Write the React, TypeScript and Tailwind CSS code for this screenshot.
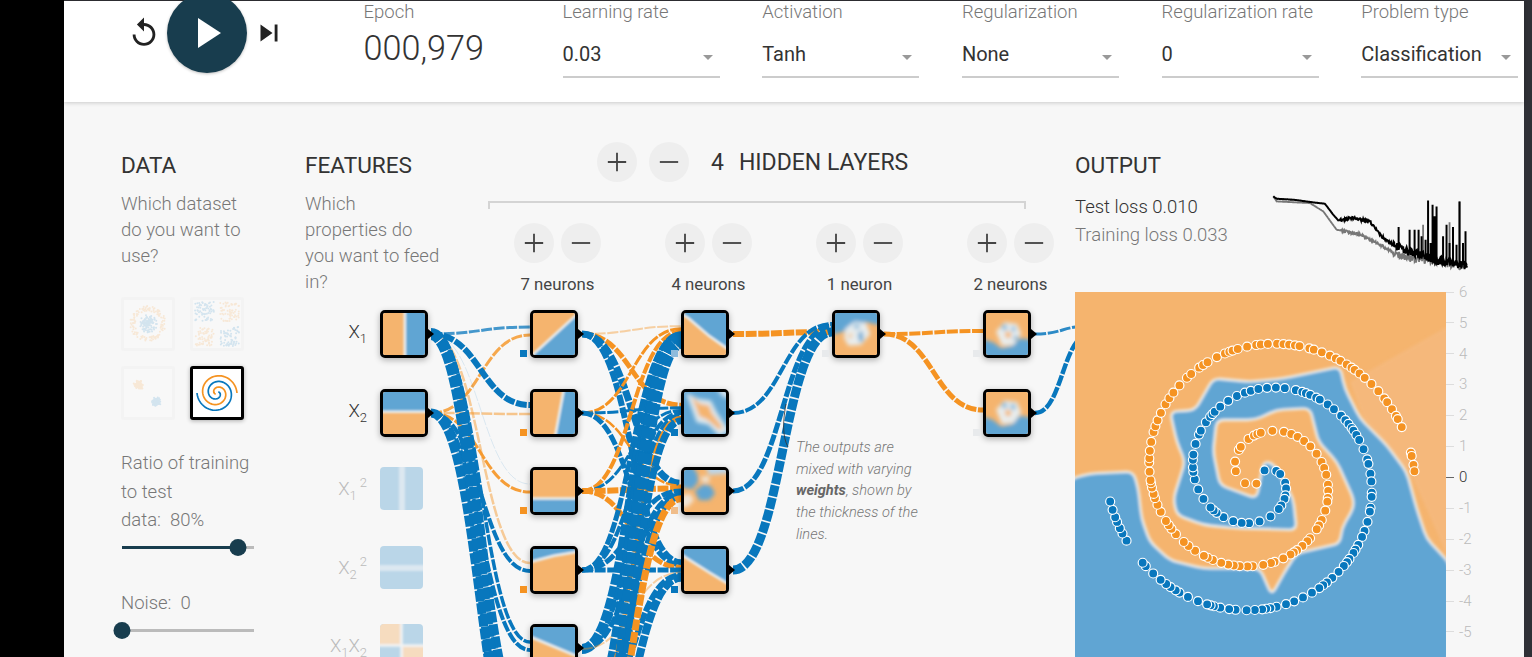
import { ReactNode } from 'react';

const BLUE = '#0877bd';
const ORANGE = '#f59322';
const HEAT_B = '#61a5d3';
const HEAT_O = '#f5b46e';

// small seeded random so the page is the same on every load
function seeded(seed: number) {
  let s = seed;
  return () => {
    s = (s * 1664525 + 1013904223) % 4294967296;
    return s / 4294967296;
  };
}

function curve(sx: number, sy: number, tx: number, ty: number) {
  const m = (sx + tx) / 2;
  return `M${sx} ${sy}C${m} ${sy} ${m} ${ty} ${tx} ${ty}`;
}

// ---------- heatmaps ----------

type Shape = { p: string; c?: string; bare?: boolean };
type HeatDef = { base: string; shapes: Shape[]; cloudy?: boolean };

function Heat({ def }: { def: HeatDef }) {
  return (
    <svg viewBox="0 0 100 100" className="block h-full w-full">
      <rect x="0" y="0" width="100" height="100" fill={def.base} />
      <g filter={def.cloudy ? 'url(#cloud)' : 'url(#soft)'}>
        {def.shapes.map((s, i) => (
          <polygon
            key={i}
            points={s.p}
            fill={s.c ?? HEAT_B}
            stroke={s.bare ? 'none' : '#e9eff1'}
            strokeWidth="6"
          />
        ))}
      </g>
    </svg>
  );
}

const HEATS: Record<string, HeatDef> = {
  x1: { base: HEAT_O, shapes: [{ p: '52,-10 110,-10 110,110 52,110' }] },
  x2: { base: HEAT_O, shapes: [{ p: '-10,-10 110,-10 110,47 -10,47' }] },
  x1sq: { base: HEAT_B, shapes: [{ p: '44,-10 58,-10 58,110 44,110', c: '#b5d3e8', bare: true }] },
  x2sq: { base: HEAT_B, shapes: [{ p: '-10,44 110,44 110,58 -10,58', c: '#b5d3e8', bare: true }] },
  xx: {
    base: HEAT_B,
    shapes: [
      { p: '-10,-10 50,-10 50,50 -10,50', c: HEAT_O },
      { p: '50,50 110,50 110,110 50,110', c: HEAT_O },
    ],
  },
  a1: { base: HEAT_O, shapes: [{ p: '-10,108 110,-2 110,110 -10,110' }] },
  a2: { base: HEAT_O, shapes: [{ p: '74,-10 110,-10 110,110 52,110' }] },
  a3: { base: HEAT_O, shapes: [{ p: '-10,68 110,68 110,110 -10,110' }] },
  a4: { base: HEAT_O, shapes: [{ p: '-10,-10 110,-10 110,6 50,16 -10,32' }] },
  a5: { base: HEAT_O, shapes: [{ p: '-10,-10 110,-10 110,72 -10,22' }] },
  b1: { base: HEAT_O, shapes: [{ p: '-10,-10 110,-10 110,90 60,55 10,12 -10,0' }] },
  b2: {
    base: HEAT_B,
    shapes: [
      { p: '4,2 34,16 64,20 78,48 108,92 84,104 58,78 30,72 20,44', c: '#dfe9ee', bare: true },
      { p: '18,10 38,28 60,32 66,50 92,84 84,90 56,66 36,58 30,40', c: HEAT_O, bare: true },
      { p: '76,-10 110,-10 110,16 92,12', c: '#cfe1ee', bare: true },
    ],
    cloudy: true,
  },
  b3: {
    base: HEAT_O,
    shapes: [
      { p: '-10,-10 20,-10 32,10 34,28 20,46 -10,40', bare: true },
      { p: '26,50 46,34 64,38 74,56 60,72 36,72', bare: true },
      { p: '50,-10 110,-10 110,8 60,12', c: '#bcd6e9', bare: true },
      { p: '-10,62 14,56 24,72 8,88 -10,88', c: '#f0e4d6', bare: true },
      { p: '40,16 60,14 60,30 44,30', c: '#ece3d6', bare: true },
    ],
    cloudy: true,
  },
  b4: { base: HEAT_O, shapes: [{ p: '-10,-10 110,-10 110,86 60,56 0,18 -10,10' }] },
  c1: {
    base: HEAT_O,
    shapes: [
      { p: '-10,-10 110,-10 110,30 75,22 40,30 22,44 -10,52', bare: true },
      { p: '24,38 46,20 74,24 84,50 62,76 32,78 22,60', c: '#e8edee', bare: true },
      { p: '46,24 62,30 54,40 44,36', c: '#9cc5e0', bare: true },
      { p: '54,48 66,42 68,66 58,70', c: '#74add6', bare: true },
      { p: '30,52 42,46 40,60 32,62', c: '#f3cfa6', bare: true },
    ],
    cloudy: true,
  },
  d1: {
    base: HEAT_O,
    shapes: [
      { p: '-10,62 18,70 36,84 64,78 80,60 110,64 110,110 -10,110', bare: true },
      { p: '24,44 44,22 74,26 84,50 66,76 38,78', c: '#e8edee', bare: true },
      { p: '36,30 48,26 52,38 40,42', c: '#8fbddd', bare: true },
      { p: '62,30 72,36 68,46 60,42', c: '#8fbddd', bare: true },
      { p: '46,44 60,46 58,60 46,58', c: HEAT_O, bare: true },
      { p: '70,52 78,58 70,68 64,60', c: '#8fbddd', bare: true },
    ],
    cloudy: true,
  },
  d2: {
    base: HEAT_O,
    shapes: [
      { p: '-10,58 16,66 36,82 64,76 80,56 110,62 110,110 -10,110', bare: true },
      { p: '24,42 44,20 74,24 84,48 66,74 38,76', c: '#e8edee', bare: true },
      { p: '36,28 48,24 52,36 40,40', c: '#8fbddd', bare: true },
      { p: '60,26 72,32 68,44 58,40', c: '#8fbddd', bare: true },
      { p: '46,42 60,44 58,58 46,56', c: HEAT_O, bare: true },
    ],
    cloudy: true,
  },
};

// ---------- network ----------

const ORIGIN_X = 305;
const ORIGIN_Y = 300;

type NodeDef = { x: number; y: number; heat: string; bias?: string };

const NODES: NodeDef[] = [
  { x: 380, y: 310, heat: 'x1' },
  { x: 380, y: 389, heat: 'x2' },
  { x: 530, y: 310, heat: 'a1', bias: BLUE },
  { x: 530, y: 389, heat: 'a2', bias: ORANGE },
  { x: 530, y: 467, heat: 'a3', bias: ORANGE },
  { x: 530, y: 546, heat: 'a4', bias: ORANGE },
  { x: 530, y: 624, heat: 'a5' },
  { x: 681, y: 310, heat: 'b1', bias: '#8dbbdc' },
  { x: 681, y: 389, heat: 'b2', bias: BLUE },
  { x: 681, y: 467, heat: 'b3', bias: '#f0bd8a' },
  { x: 681, y: 546, heat: 'b4', bias: BLUE },
  { x: 832, y: 310, heat: 'c1', bias: '#e8eaec' },
  { x: 983, y: 310, heat: 'd1', bias: '#e8eaec' },
  { x: 983, y: 389, heat: 'd2', bias: '#e8eaec' },
];

// sx, sy, tx, ty, width (negative = orange), opacity
type LinkDef = [number, number, number, number, number, number?];

const S_OUT = [334, 413, 491, 570, 649, 728, 806];

const T_Y = (center: number, i: number) => center + (i - 3) * 2.6;

// source row -> width into each of the four nodes of the second layer
const MIDDLE: [number, number, number, number][] = [
  [-2, -5, 7, 6],
  [-3, 3, -2.5, 5],
  [-4, 3, -6, -5],
  [5, 4, 5, 5],
  [10, 5, 5, -2],
  [12, -5, 7, 6],
  [14, 7, -7, 8],
];

const LINKS: LinkDef[] = [
  [431, 334, 530, 327, 3, 0.75],
  [431, 413, 530, 335, -3, 0.8],
  [431, 334, 530, 405, 6],
  [431, 413, 530, 414, -2.5, 0.5],
  [431, 334, 530, 484, 1, 0.12],
  [431, 413, 530, 492, -3, 0.9],
  [431, 334, 530, 563, -2.5, 0.45],
  [431, 413, 530, 571, 4],
  [431, 334, 530, 642, 3.5],
  [431, 413, 530, 650, 4],
  [431, 413, 530, 712, 4, 0.65],
  [431, 334, 530, 728, 9],
  [431, 413, 530, 790, 9],
  [431, 334, 530, 800, 12],
];

S_OUT.forEach((sy, row) => {
  const centers = [334, 413, 491, 570];
  MIDDLE[row].forEach((w, j) => {
    const light = Math.abs(w) <= 2;
    LINKS.push([582, sy, 681, T_Y(centers[j], row), w, light ? 0.4 : undefined]);
  });
});

LINKS.push(
  [733, 334, 832, 332, -6],
  [733, 413, 832, 324, 4],
  [733, 491, 832, 326, 5],
  [733, 570, 832, 332, 9],
  [884, 334, 983, 331, -4],
  [884, 334, 983, 410, -5],
  [1035, 334, 1090, 326, 3, 0.85],
  [1035, 413, 1090, 334, 4.5],
);

function LinkLayer() {
  return (
    <svg
      viewBox={`${ORIGIN_X} ${ORIGIN_Y} 800 400`}
      className="absolute left-0 top-0 h-[400px] w-[800px]"
      fill="none"
    >
      {LINKS.map(([sx, sy, tx, ty, w, op], i) => (
        <path
          key={i}
          d={curve(sx, sy, tx, ty)}
          stroke={w < 0 ? ORANGE : BLUE}
          strokeWidth={Math.abs(w)}
          strokeOpacity={op ?? 1}
          strokeDasharray="11 1.6"
        />
      ))}
      <path d="M786 404C783 420 782 436 788 447" stroke="#333" strokeWidth="0.8" />
    </svg>
  );
}

function Node({ def }: { def: NodeDef }) {
  return (
    <div
      className="absolute h-12 w-12"
      style={{ left: def.x - ORIGIN_X, top: def.y - ORIGIN_Y }}
    >
      <div className="h-12 w-12 overflow-hidden rounded-[5px] border-[3px] border-black bg-white shadow-[0_2px_6px_rgba(0,0,0,0.3)]">
        <Heat def={HEATS[def.heat]} />
      </div>
      <div className="absolute left-12 top-[19px] h-0 w-0 border-y-[5px] border-l-[6px] border-y-transparent border-l-black" />
      {def.bias && (
        <div
          className="absolute left-[-10px] top-10 h-[7px] w-[7px]"
          style={{ backgroundColor: def.bias }}
        />
      )}
    </div>
  );
}

function Sub({ children }: { children: ReactNode }) {
  return <sub className="relative top-[5px] align-baseline text-[13px]">{children}</sub>;
}

function Sup({ children }: { children: ReactNode }) {
  return <sup className="relative top-[-8px] ml-[3px] align-baseline text-[13px]">{children}</sup>;
}

const FEATURES: { y: number; active: boolean; heat: string; label: ReactNode }[] = [
  { y: 310, active: true, heat: 'x1', label: <>X<Sub>1</Sub></> },
  { y: 389, active: true, heat: 'x2', label: <>X<Sub>2</Sub></> },
  { y: 467, active: false, heat: 'x1sq', label: <>X<Sub>1</Sub><Sup>2</Sup></> },
  { y: 546, active: false, heat: 'x2sq', label: <>X<Sub>2</Sub><Sup>2</Sup></> },
  { y: 624, active: false, heat: 'xx', label: <>X<Sub>1</Sub>X<Sub>2</Sub></> },
];

function Network() {
  return (
    <div className="relative h-[400px]">
      <LinkLayer />
      {FEATURES.map((f) => (
        <div key={f.y}>
          <div
            className={`absolute w-[62px] text-right text-[18.5px] font-light leading-[22px] ${f.active ? 'text-[#333]' : 'text-[#bbb]'}`}
            style={{ left: 0, top: f.y - ORIGIN_Y + 11 }}
          >
            {f.label}
          </div>
          {!f.active && (
            <div
              className="absolute h-[43px] w-[43px] overflow-hidden rounded-[4px] opacity-40"
              style={{ left: 380 - ORIGIN_X, top: f.y - ORIGIN_Y }}
            >
              <Heat def={HEATS[f.heat]} />
            </div>
          )}
        </div>
      ))}
      {NODES.map((n) => (
        <Node key={`${n.x}-${n.y}`} def={n} />
      ))}
      <p className="absolute left-[491px] top-[137px] whitespace-nowrap text-[14.6px] font-light italic leading-[21.7px] text-[#777]">
        The outputs are
        <br />
        mixed with varying
        <br />
        <b className="font-bold text-[#666]">weights</b>, shown by
        <br />
        the thickness of the
        <br />
        lines.
      </p>
    </div>
  );
}

// ---------- small controls ----------

function RoundBtn({ minus }: { minus?: boolean }) {
  return (
    <button className="flex h-10 w-10 items-center justify-center rounded-full bg-[#eeeeee]">
      <svg viewBox="0 0 24 24" className="h-[22px] w-[22px]" fill="none" stroke="#444" strokeWidth="2">
        <path d={minus ? 'M2 12h20' : 'M2 12h20M12 2v20'} />
      </svg>
    </button>
  );
}

function Select({ label, value }: { label: string; value: string }) {
  return (
    <div className="mr-[42.7px] w-[157px] shrink-0">
      <div className="text-[18.5px] font-light leading-[22px] text-[#777]">{label}</div>
      <div className="mt-[19px] flex items-center justify-between border-b-2 border-[#ccc] pb-[10px] pr-[7px] text-[20px] leading-[24px] text-[#333]">
        <span className="whitespace-nowrap">{value}</span>
        <span className="mt-[7px] h-0 w-0 border-x-[5.5px] border-t-[5.5px] border-x-transparent border-t-[#999]" />
      </div>
    </div>
  );
}

function Slider({ pct }: { pct: number }) {
  return (
    <div className="relative ml-px h-[3px] w-[132px] bg-[#bbb]">
      <div className="h-[3px] bg-[#183d4e]" style={{ width: `${pct}%` }} />
      <div
        className="absolute top-[-7px] h-[17px] w-[17px] -translate-x-1/2 rounded-full bg-[#183d4e]"
        style={{ left: `${pct}%` }}
      />
    </div>
  );
}

// ---------- dataset thumbnails ----------

function dots(kind: string) {
  const rnd = seeded(kind.length * 97 + 11);
  const out: { x: number; y: number; c: string }[] = [];
  const gauss = () => (rnd() + rnd() + rnd() - 1.5) / 1.5;
  for (let i = 0; i < 260; i++) {
    if (kind === 'circle') {
      const a = rnd() * Math.PI * 2;
      if (i % 2) {
        const r = 13 + rnd() * 5;
        out.push({ x: 27 + r * Math.cos(a), y: 27 + r * Math.sin(a), c: ORANGE });
      } else {
        const r = rnd() * 9;
        out.push({ x: 27 + r * Math.cos(a), y: 27 + r * Math.sin(a), c: BLUE });
      }
    } else if (kind === 'xor') {
      const qx = i % 2 ? 1 : -1;
      const qy = i % 4 < 2 ? 1 : -1;
      out.push({
        x: 27 + qx * (3 + rnd() * 19),
        y: 27 + qy * (3 + rnd() * 19),
        c: qx * qy > 0 ? BLUE : ORANGE,
      });
    } else {
      const left = i % 2 === 0;
      out.push({
        x: (left ? 18 : 35) + gauss() * 5.5,
        y: (left ? 19 : 36) + gauss() * 5.5,
        c: left ? ORANGE : BLUE,
      });
    }
  }
  return out;
}

function spiralPath(delta: number, scale: number, cx: number, cy: number) {
  let d = '';
  for (let i = 8; i <= 100; i++) {
    const f = i / 100;
    const t = 3.5 * Math.PI * f + delta;
    const r = scale * f;
    d += `${i === 8 ? 'M' : 'L'}${(cx + r * Math.sin(t)).toFixed(2)} ${(cy - r * Math.cos(t)).toFixed(2)}`;
  }
  return d;
}

function DatasetThumb({ kind }: { kind: string }) {
  const selected = kind === 'spiral';
  return (
    <div
      className={`h-[54px] w-[54px] rounded-[3px] border-[3px] ${selected ? 'border-black bg-white shadow-[0_1px_4px_rgba(0,0,0,0.3)]' : 'border-[#f3f3f3] bg-[#f8f8f8]'}`}
    >
      <svg viewBox="0 0 48 48" className="block h-full w-full">
        {selected ? (
          <g fill="none" strokeWidth="1.7">
            <path d={spiralPath(0, 20, 24, 24)} stroke={BLUE} />
            <path d={spiralPath(Math.PI, 20, 24, 24)} stroke={ORANGE} />
          </g>
        ) : (
          <g opacity="0.15">
            {dots(kind).map((d, i) => (
              <circle key={i} cx={d.x - 3} cy={d.y - 3} r="1" fill={d.c} />
            ))}
          </g>
        )}
      </svg>
    </div>
  );
}

// ---------- output plot ----------

const CX = 571.5;
const CY = 576;
const UNIT = 92.75;

// stretches of each arm with no dots, as fraction of the arm
const BLUE_GAPS: [number, number][] = [
  [0.987, 0.998], [0.944, 0.958], [0.72, 0.726],
];
const ORANGE_GAPS: [number, number][] = [
  [0.972, 0.98], [0.745, 0.75],
];

function spiralPoints(delta: number, gaps: [number, number][], seed: number) {
  const rnd = seeded(seed);
  const pts: { x: number; y: number }[] = [];
  let f = 0.05;
  while (f <= 1) {
    if (!gaps.some(([a, b]) => f >= a && f <= b)) {
      const t = 3.5 * Math.PI * f + delta;
      const r = 5 * f * UNIT;
      pts.push({ x: CX + r * Math.sin(t), y: CY - r * Math.cos(t) });
    }
    // walk along the arc in steps of roughly one dot
    const ds = 9 + rnd() * 24;
    f += ds / Math.max(5 * f * UNIT * 3.5 * Math.PI, 180);
  }
  return pts;
}

// polygon with its corners slightly rounded
function roundedPath(points: string, radius: number) {
  const pts = points.split(' ').map((s) => s.split(',').map(Number));
  const n = pts.length;
  let d = '';
  pts.forEach((p, i) => {
    const a = pts[(i + n - 1) % n];
    const b = pts[(i + 1) % n];
    const la = Math.hypot(a[0] - p[0], a[1] - p[1]);
    const lb = Math.hypot(b[0] - p[0], b[1] - p[1]);
    const ra = Math.min(radius, la / 2) / la;
    const rb = Math.min(radius, lb / 2) / lb;
    const x0 = p[0] + (a[0] - p[0]) * ra;
    const y0 = p[1] + (a[1] - p[1]) * ra;
    const x1 = p[0] + (b[0] - p[0]) * rb;
    const y1 = p[1] + (b[1] - p[1]) * rb;
    d += `${i ? 'L' : 'M'}${x0.toFixed(1)} ${y0.toFixed(1)}Q${p[0]} ${p[1]} ${x1.toFixed(1)} ${y1.toFixed(1)}`;
  });
  return `${d}Z`;
}

const BLUE_REGION =
  '300,380 375,375 430,280 540,290 640,280 810,245 825,310 870,400 950,480 1010,560 1040,670 1070,760 1140,835 1140,1130 0,1130 0,582 60,565 190,560 205,610 215,700 240,770 300,825 400,850 570,850 605,930 650,850 680,805 810,775 815,730 850,670 850,640 800,530 745,470 720,370 620,375 555,405 440,405 430,500 450,600 560,640 580,530 610,535 670,640 680,735 500,730 400,720 320,690 310,640 345,530 320,470';

function Plot() {
  const blue = spiralPoints(0, BLUE_GAPS, 42);
  const orange = spiralPoints(Math.PI, ORANGE_GAPS, 7);
  const ticks = [6, 5, 4, 3, 2, 1, 0, -1, -2, -3, -4, -5];
  return (
    <div className="relative h-[365px] w-[371px]">
      <svg viewBox="15 21 1113 1095" className="block h-[365px] w-[371px]">
        <rect x="15" y="21" width="1113" height="1095" fill={HEAT_O} />
        <polygon points="1140,120 840,290 880,400 1020,560 1140,830" fill="#f5bc85" opacity="0.6" filter="url(#plotsoft)" />
        <path d={roundedPath(BLUE_REGION, 22)} fill={HEAT_B} stroke="#eef2f3" strokeWidth="7" filter="url(#plotsoft)" />
        {orange.map((p, i) => (
          <circle key={i} cx={p.x} cy={p.y} r="13.5" fill={ORANGE} stroke="#fff" strokeWidth="3.5" />
        ))}
        {blue.map((p, i) => (
          <circle key={i} cx={p.x} cy={p.y} r="13.5" fill={BLUE} stroke="#fff" strokeWidth="3.5" />
        ))}
      </svg>
      {ticks.map((v) => (
        <div
          key={v}
          className="absolute left-[371px] flex h-5 items-center whitespace-nowrap text-[15px] font-light"
          style={{ top: (6 - v) * 30.9 - 10 }}
        >
          <span className={`mr-[5px] h-px w-2 ${v === 0 ? 'bg-[#666]' : 'bg-[#ddd]'}`} />
          <span className={v === 0 ? 'text-[#333]' : 'text-[#bbb]'}>{v}</span>
        </div>
      ))}
    </div>
  );
}

function lossLine(base: [number, number][], seed: number, spikes: number[]) {
  const rnd = seeded(seed);
  let d = '';
  for (let x = 640; x <= 1222; x += 1.5) {
    let k = 0;
    while (k < base.length - 2 && base[k + 1][0] < x) k++;
    const [x0, y0] = base[k];
    const [x1, y1] = base[k + 1];
    let y = y0 + ((y1 - y0) * (x - x0)) / (x1 - x0);
    const noise = x > 1000 ? 26 : x > 840 ? 8 : 0.5;
    y += (rnd() - 0.5) * noise;
    d += `${d ? 'L' : 'M'}${x.toFixed(1)} ${y.toFixed(1)}`;
    for (let s = 0; s < spikes.length; s += 2) {
      if (Math.abs(spikes[s] - x) < 0.8) d += `L${x.toFixed(1)} ${spikes[s + 1]}L${x.toFixed(1)} ${y.toFixed(1)}`;
    }
  }
  return d;
}

function LossChart() {
  const test = lossLine(
    [[640, 140], [650, 147], [700, 150], [760, 158], [795, 162], [820, 195], [835, 212], [880, 205], [930, 215], [965, 260], [1000, 285], [1030, 300], [1130, 330], [1222, 350]],
    5,
    [1017, 232, 1050, 240, 1065, 240, 1076, 240, 1085, 260, 1097, 270, 1105, 152, 1112, 280, 1118, 165, 1124, 200, 1130, 170, 1150, 260, 1160, 225, 1170, 280, 1180, 232, 1190, 285, 1200, 155, 1210, 280, 1218, 245],
  );
  const train = lossLine(
    [[640, 140], [650, 155], [750, 160], [790, 185], [830, 240], [900, 255], [960, 285], [1020, 320], [1100, 330], [1222, 350]],
    9,
    [1090, 225, 1170, 218, 1200, 155],
  );
  return (
    <svg viewBox="630 130 610 240" className="h-20 w-[203px]" fill="none">
      <path d={train} stroke="#777" strokeWidth="5.5" />
      <path d={test} stroke="#000" strokeWidth="6" />
    </svg>
  );
}

// ---------- page ----------

export default function App() {
  return (
    <div className="flex h-[657px] w-full overflow-hidden bg-black [font-family:Roboto,sans-serif]">
      <svg className="absolute h-0 w-0">
        <defs>
          <filter id="soft" x="-20%" y="-20%" width="140%" height="140%">
            <feGaussianBlur stdDeviation="2.6" />
          </filter>
          <filter id="cloud" x="-20%" y="-20%" width="140%" height="140%">
            <feGaussianBlur stdDeviation="5" />
          </filter>
          <filter id="plotsoft" x="-5%" y="-5%" width="110%" height="110%">
            <feGaussianBlur stdDeviation="5" />
          </filter>
        </defs>
      </svg>

      <div className="ml-16 h-full min-w-0 flex-1 bg-[#f7f7f7]">
        <div className="h-px bg-[#2f2f33]" />
        <header className="relative z-10 flex h-[101px] bg-white shadow-[0_1px_4px_rgba(0,0,0,0.18)]">
          <div className="ml-[63px] mt-[-8px] flex h-20 items-center">
            <svg viewBox="0 0 24 24" className="h-[34px] w-[34px]" fill="#222">
              <path d="M12 5V1L7 6l5 5V7c3.31 0 6 2.69 6 6s-2.69 6-6 6-6-2.69-6-6H4c0 4.42 3.58 8 8 8s8-3.58 8-8-3.58-8-8-8z" />
            </svg>
            <button className="ml-1.5 flex h-20 w-20 items-center justify-center rounded-full bg-[#183d4e] shadow-[0_1px_3px_rgba(0,0,0,0.25)]">
              <svg viewBox="0 0 23 30" className="ml-[5px] h-[30px] w-[23px]" fill="#fff">
                <path d="M0 0l23 15L0 30z" />
              </svg>
            </button>
            <svg viewBox="0 0 24 24" className="ml-[4.5px] h-[34px] w-[34px]" fill="#222">
              <path d="M6 18l8.5-6L6 6v12zM16 6v12h2V6h-2z" />
            </svg>
          </div>
          <div className="ml-[78px] w-[199px] shrink-0">
            <div className="text-[18.5px] font-light leading-[22px] text-[#777]">Epoch</div>
            <div className="mt-[5px] text-[34.2px] font-light leading-[40px] text-[#333]">000,979</div>
          </div>
          <Select label="Learning rate" value="0.03" />
          <Select label="Activation" value="Tanh" />
          <Select label="Regularization" value="None" />
          <Select label="Regularization rate" value="0" />
          <Select label="Problem type" value="Classification" />
        </header>

        <div className="flex">
          <section className="w-[241px] shrink-0 pl-[57px] pt-[51px]">
            <h4 className="text-[22.6px] leading-[26px] text-[#333]">DATA</h4>
            <p className="mt-3 text-[18.5px] font-light leading-[26px] text-[#777]">
              Which dataset
              <br />
              do you want to
              <br />
              use?
            </p>
            <div className="mt-7 grid w-[123px] grid-cols-2 gap-[15px]">
              <DatasetThumb kind="circle" />
              <DatasetThumb kind="xor" />
              <DatasetThumb kind="gauss" />
              <DatasetThumb kind="spiral" />
            </div>
            <p className="mt-[29px] text-[18.5px] font-light leading-[28.5px] text-[#777]">
              Ratio of training
              <br />
              to test
              <br />
              data:&nbsp; 80%
            </p>
            <div className="mt-[11px]">
              <Slider pct={88} />
            </div>
            <p className="mt-[41px] text-[18.5px] font-light leading-[26px] text-[#777]">Noise:&nbsp; 0</p>
            <div className="mt-[13px]">
              <Slider pct={0} />
            </div>
          </section>

          <section className="w-[770px] shrink-0">
            <div className="flex h-[198px]">
              <div className="w-[183px] shrink-0 pt-[51px]">
                <h4 className="text-[22.6px] leading-[26px] text-[#333]">FEATURES</h4>
                <p className="mt-3 text-[18.5px] font-light leading-[26px] text-[#777]">
                  Which
                  <br />
                  properties do
                  <br />
                  you want to feed
                  <br />
                  in?
                </p>
              </div>
              <div className="w-[587px] shrink-0">
                <div className="ml-[109px] flex items-center gap-3 pt-10">
                  <RoundBtn />
                  <RoundBtn minus />
                  <span className="ml-2.5 flex pt-px text-[23px] leading-[26px] text-[#333]">
                    <span className="mr-[15px]">4</span>
                    <span>HIDDEN LAYERS</span>
                  </span>
                </div>
                <div className="mt-[19px] h-2 w-[538px] border-x-2 border-t-2 border-[#d4d4d4]" />
                <div className="mt-[14px] flex pl-[26px]">
                  {['7 neurons', '4 neurons', '1 neuron', '2 neurons'].map((n) => (
                    <div key={n} className="mr-16 w-[87px] shrink-0">
                      <div className="flex gap-[7px]">
                        <RoundBtn />
                        <RoundBtn minus />
                      </div>
                      <div className="mt-[11px] whitespace-nowrap text-center text-[16.8px] leading-5 text-[#444]">{n}</div>
                    </div>
                  ))}
                </div>
              </div>
            </div>
            <Network />
          </section>

          <section className="relative min-w-0 flex-1 pt-[51px]">
            <h4 className="text-[22.6px] leading-[26px] text-[#333]">OUTPUT</h4>
            <div className="mt-[14px] flex h-[99px] items-start">
              <div className="w-[153px] shrink-0 whitespace-nowrap text-[18.5px] font-light leading-[28px]">
                <div className="text-[#333]">Test loss 0.010</div>
                <div className="text-[#777]">Training loss 0.033</div>
              </div>
              <div className="ml-[42px]">
                <LossChart />
              </div>
            </div>
            <Plot />
          </section>
        </div>
      </div>
      <div className="w-2 shrink-0 bg-[#2f3036]" />
    </div>
  );
}
